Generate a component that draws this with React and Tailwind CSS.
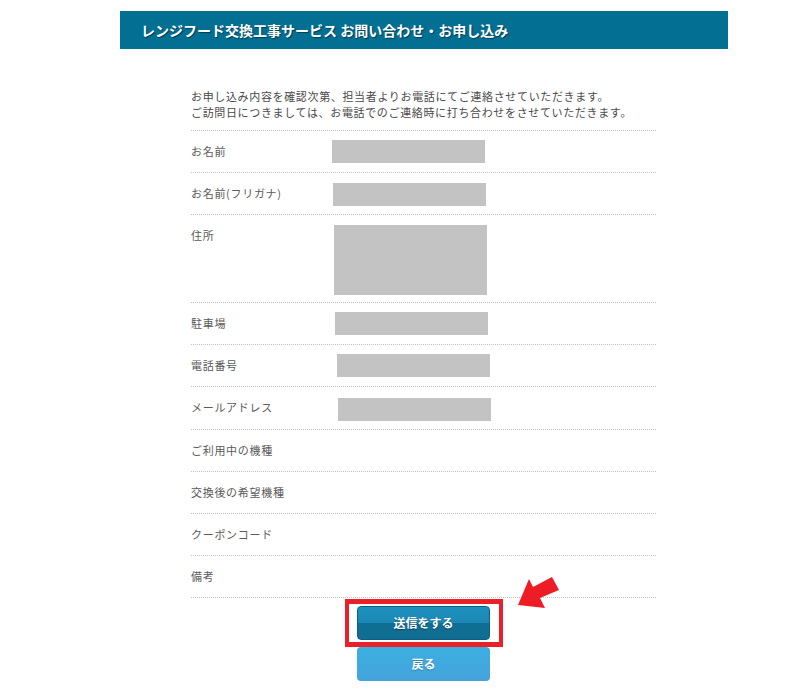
import React from 'react';

const rows = [
  { label: 'お名前', h: 'h-[42px]', box: 'ml-[0px] mt-[9px] h-[23px]' },
  { label: 'お名前(フリガナ)', h: 'h-[42px]', box: 'ml-[1px] mt-[10px] h-[23px]' },
  { label: '住所', h: 'h-[88px]', box: 'ml-[2px] mt-[10px] h-[70px]' },
  { label: '駐車場', h: 'h-[42px]', box: 'ml-[3px] mt-[9px] h-[23px]' },
  { label: '電話番号', h: 'h-[42px]', box: 'ml-[5px] mt-[9px] h-[23px]' },
  { label: 'メールアドレス', h: 'h-[43px]', box: 'ml-[6px] mt-[11px] h-[23px]' },
  { label: 'ご利用中の機種', h: 'h-[42px]' },
  { label: '交換後の希望機種', h: 'h-[42px]' },
  { label: 'クーポンコード', h: 'h-[42px]' },
  { label: '備考', h: 'h-[42px]' },
];

const App = () => {
  return (
    <div className="relative min-h-[695px] bg-white pt-[11px] font-['Noto_Sans_CJK_JP',sans-serif]">
      <div className="ml-[120px] w-[608px]">
        {/* Title bar */}
        <div className="flex h-[38px] items-center bg-[#036f93] pl-[21px]">
          <h1 className="text-[14px] font-bold text-white [text-shadow:1px_1px_1px_rgba(0,0,0,0.45)]">
            レンジフード交換工事サービス お問い合わせ・お申し込み
          </h1>
        </div>

        <div className="ml-[71px] w-[465px] pt-[39px]">
          <p className="mb-[10px] text-[11px] leading-[16px] tracking-[0.65px] text-[#4a4a4a]">
            お申し込み内容を確認次第、担当者よりお電話にてご連絡させていただきます。
            <br />
            ご訪問日につきましては、お電話でのご連絡時に打ち合わせをさせていただきます。
          </p>

          {/* Form rows */}
          <div className="border-b border-dotted border-[#c4c4c4]">
            {rows.map((row) => (
              <div
                key={row.label}
                className={`flex border-t border-dotted border-[#c4c4c4] ${row.h}`}
              >
                <div className="w-[141px] shrink-0 pt-[9px] text-[11px] leading-[23px] tracking-[0.7px] text-[#5a5a5a]">
                  {row.label}
                </div>
                {row.box && <div className={`w-[153px] bg-[#c3c3c3] ${row.box}`} />}
              </div>
            ))}
          </div>

          {/* Buttons */}
          <div className="flex flex-col items-center pt-[8px]">
            <div className="relative">
              <div className="pointer-events-none absolute left-[-12px] top-[-7px] h-[48px] w-[158px] border-x-4 border-y-[5px] border-[#e8202a]" />
              <button className="flex h-[34px] w-[133px] items-center justify-center rounded-[4px] border border-[#0c5f80] bg-[linear-gradient(#1f91bf_0%,#1a88b5_50%,#0f6e92_50%,#0f6e92_100%)] text-[12px] font-bold text-white [text-shadow:0_1px_1px_rgba(0,0,0,0.4)]">
                送信をする
              </button>
            </div>
            <button className="mt-[7px] flex h-[34px] w-[133px] items-center justify-center rounded-[4px] bg-[linear-gradient(#3aafe0,#46a3dc)] text-[12px] font-bold text-white [text-shadow:0_1px_1px_rgba(0,0,0,0.25)]">
              戻る
            </button>
          </div>
        </div>
      </div>

      {/* Red arrow annotation */}
      <svg
        className="absolute left-[505px] top-[565px]"
        width="65"
        height="50"
        viewBox="0 0 65 50"
      >
        <polygon
          points="13,40 24,14 28,22 47,12 54,25 35,33 40,43"
          fill="#ee1c25"
        />
      </svg>
    </div>
  );
};

export default App;
